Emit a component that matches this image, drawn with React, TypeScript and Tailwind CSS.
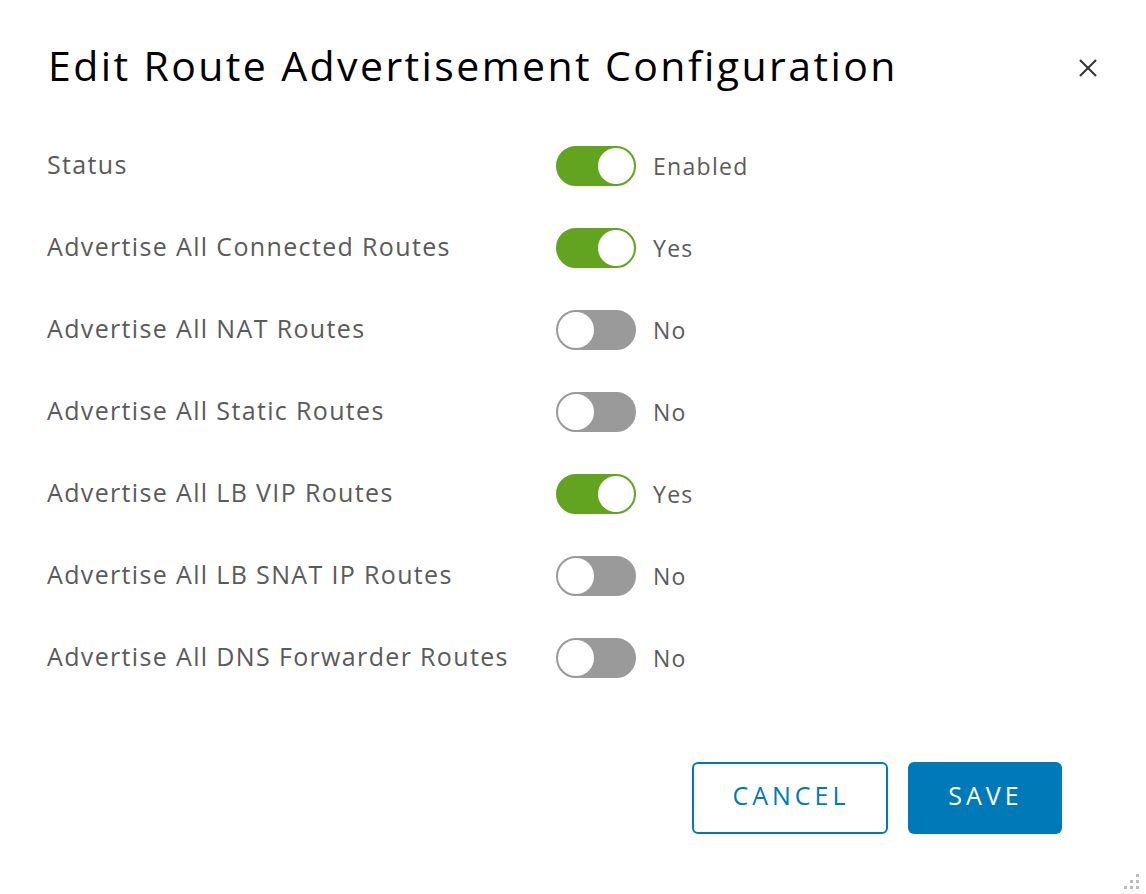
import { X } from "lucide-react";

const rows = [
  { label: "Status", on: true, value: "Enabled" },
  { label: "Advertise All Connected Routes", on: true, value: "Yes" },
  { label: "Advertise All NAT Routes", on: false, value: "No" },
  { label: "Advertise All Static Routes", on: false, value: "No" },
  { label: "Advertise All LB VIP Routes", on: true, value: "Yes" },
  { label: "Advertise All LB SNAT IP Routes", on: false, value: "No" },
  { label: "Advertise All DNS Forwarder Routes", on: false, value: "No" },
];

function Toggle({ on }: { on: boolean }) {
  return (
    <div
      className={
        on
          ? "shrink-0 w-[80px] h-[40px] rounded-full bg-[#62a420] border-2 border-[#62a420] flex items-center justify-end"
          : "shrink-0 w-[80px] h-[40px] rounded-full bg-[#9a9a9a] border-2 border-[#9a9a9a] flex items-center justify-start"
      }
    >
      <div className="w-[36px] h-[36px] rounded-full bg-white" />
    </div>
  );
}

export default function App() {
  return (
    <div className="w-[1146px] h-[894px] bg-white relative font-['Open_Sans','Noto_Sans',sans-serif]">
      <div className="flex items-start justify-between pl-[48px] pr-[43px] pt-[37px]">
        <h1 className="text-[41px] leading-[56px] text-black tracking-[2.4px]">
          Edit Route Advertisement Configuration
        </h1>
        <X className="w-[30px] h-[30px] mt-[16px] text-[#313131]" strokeWidth={1.6} />
      </div>

      <div className="pl-[47px] pt-[53px] flex flex-col gap-[42px]">
        {rows.map((r, i) => (
          <div key={i} className="flex items-center h-[40px]">
            <span className="w-[509px] shrink-0 text-[25px] text-[#5a5a5a] tracking-[1.35px] -mt-[2px]">{r.label}</span>
            <Toggle on={r.on} />
            <span className="text-[23px] text-[#5a5a5a] ml-[17px] tracking-[1.3px]">{r.value}</span>
          </div>
        ))}
      </div>

      <div className="flex justify-end gap-[20px] pr-[84px] pt-[84px]">
        <button className="w-[196px] h-[72px] rounded-[6px] border-2 border-[#0079b8] text-[#0079b8] text-[25px] tracking-[4px] pl-[2px] pb-[4px] bg-white">
          CANCEL
        </button>
        <button className="w-[154px] h-[72px] rounded-[6px] bg-[#0079b8] text-white text-[25px] tracking-[4px] pl-[1px] pb-[4px]">
          SAVE
        </button>
      </div>

      <svg className="absolute right-[6px] bottom-[4px]" width="18" height="18" viewBox="0 0 18 18">
        {[
          [14, 2],
          [8, 8],
          [14, 8],
          [2, 14],
          [8, 14],
          [14, 14],
        ].map(([x, y], i) => (
          <rect key={i} x={x} y={y} width="3" height="3" fill="#bdbdbd" />
        ))}
      </svg>
    </div>
  );
}
